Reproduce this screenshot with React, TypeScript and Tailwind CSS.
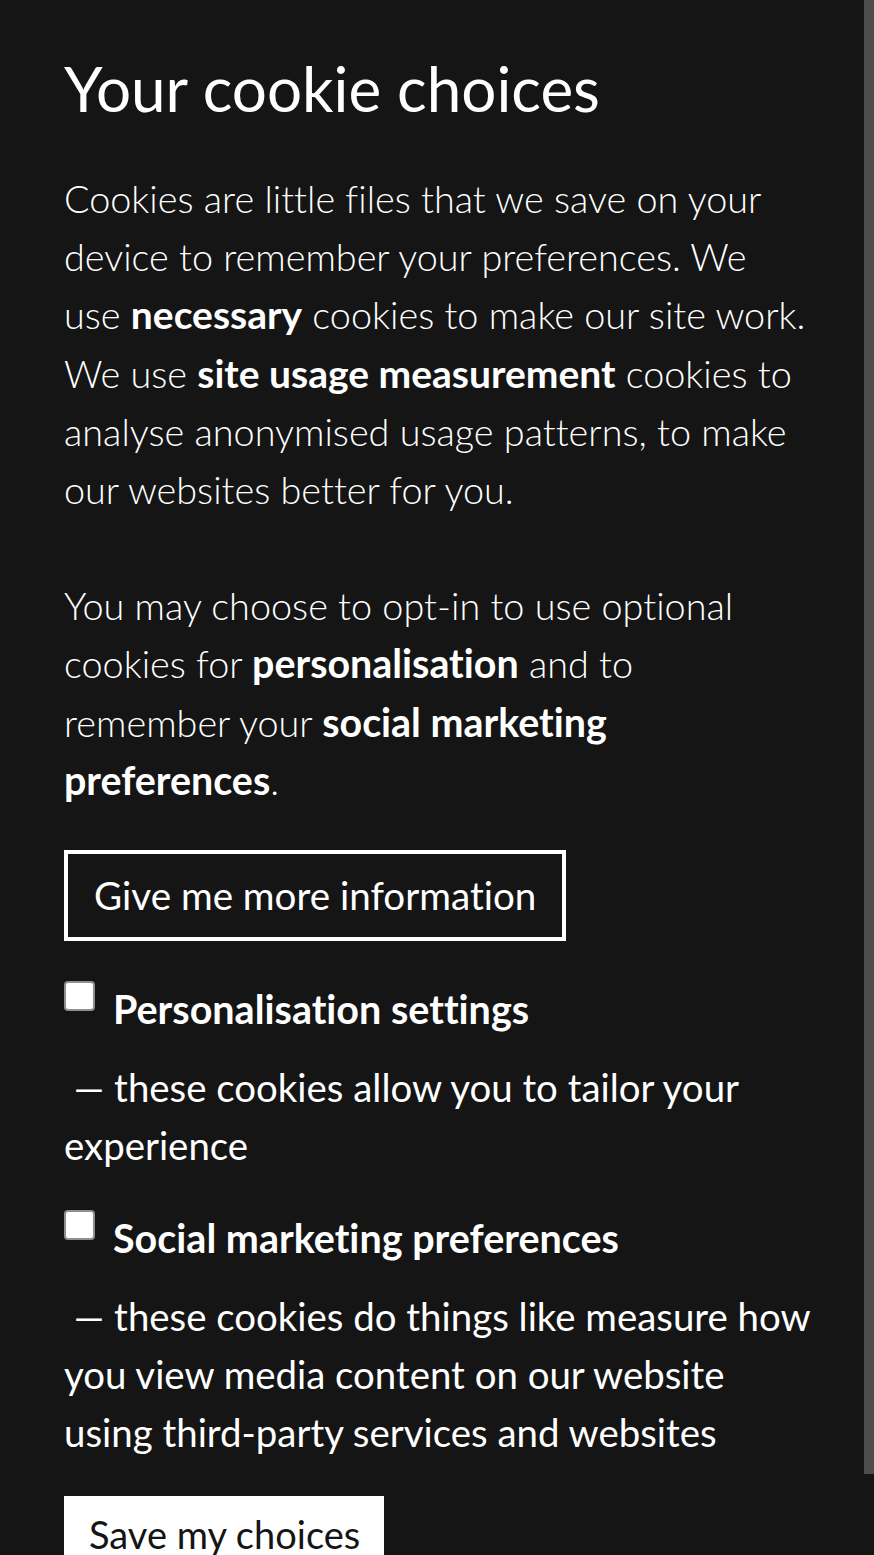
export default function App() {
  return (
    <div className="relative min-h-[1555px] bg-[#151515] text-white overflow-hidden [font-variant-ligatures:none]" style={{ fontFamily: "Lato, 'Open Sans', sans-serif" }}>
      <div className="pl-16 pt-[46px] w-[808px]">
        <h1 className="text-[62px] leading-[84px] font-normal">Your cookie choices</h1>

        <div className="mt-[40px] text-[37.8px] leading-[58.2px] font-light">
          <p>
            Cookies are little files that we save on your device to remember your preferences. We use{" "}
            <strong className="font-bold text-[39px] leading-none">necessary</strong> cookies to make our site work. We use{" "}
            <strong className="font-bold text-[39px] leading-none">site usage measurement</strong> cookies to analyse anonymised usage patterns, to make our websites better for you.
          </p>
          <p className="mt-[58px]">
            You may choose to opt-in to use optional cookies for{" "}
            <strong className="font-bold text-[39.4px] leading-none">personalisation</strong> and to remember your{" "}
            <strong className="font-bold text-[39.4px] leading-none">social marketing preferences</strong>.
          </p>
        </div>

        <button className="mt-[40px] border-4 border-white px-[26px] h-[91px] text-[38.6px] font-normal">
          Give me more information
        </button>

        <div className="mt-[39px] text-[38.4px] leading-[58px]">
          <label className="flex items-start">
            <input type="checkbox" className="mt-[1px] w-[31px] h-[30px] appearance-none bg-white rounded-[4px] border-2 border-[#8f8f8f]" />
            <span className="ml-[18px] font-bold text-[39.5px]">Personalisation settings</span>
          </label>
          <p className="mt-[20px] w-[756px]">&nbsp;— these cookies allow you to tailor your experience</p>
        </div>

        <div className="mt-[35px] text-[38.4px] leading-[58px]">
          <label className="flex items-start">
            <input type="checkbox" className="mt-[1px] w-[31px] h-[30px] appearance-none bg-white rounded-[4px] border-2 border-[#8f8f8f]" />
            <span className="ml-[18px] font-bold text-[39.5px]">Social marketing preferences</span>
          </label>
          <p className="mt-[20px] w-[756px]">&nbsp;— these cookies do things like measure how you view media content on our website using third-party services and websites</p>
        </div>

        <button className="mt-[35px] bg-white text-[#151515] pl-[25px] h-[80px] text-[38px] font-normal border-0 w-[320px] text-left">
          <span className="block -mt-[4px]">Save my choices</span>
        </button>
      </div>

      <div className="absolute right-0 top-0 w-[10px] h-[1474px] bg-[#4d4d4d]" />
    </div>
  );
}
